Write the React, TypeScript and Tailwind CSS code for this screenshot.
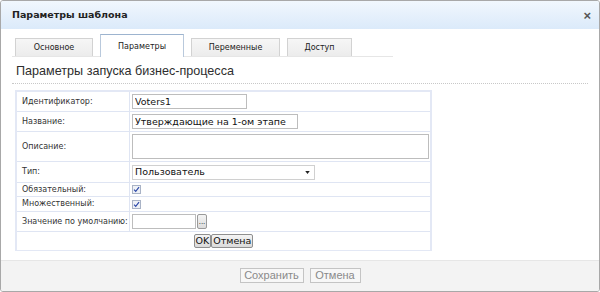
const tabs = ['Основное', 'Параметры', 'Переменные', 'Доступ'];

const ui = { fontFamily: '"DejaVu Sans", Verdana, sans-serif' };
const arial = { fontFamily: '"Liberation Sans", Arial, sans-serif' };

function Check() {
	return (
		<span className="flex h-[9px] w-[9px] items-center justify-center border border-[#a9b3c6] bg-[#eef1f6]">
			<svg viewBox="0 0 8 8" className="block h-[7px] w-[7px]">
				<path d="M1.2 4.2 L3.1 6.1 L6.9 1.3" fill="none" stroke="#2b47a8" strokeWidth="1.3" />
			</svg>
		</span>
	);
}

function Row({ label, h, children }: { label: string; h: string; children?: React.ReactNode }) {
	return (
		<div className={`grid grid-cols-[113px_1fr] border-b border-[#dfe5f3] ${h}`}>
			<div className="flex items-center border-r border-[#dfe5f3] pl-[5px] text-[8px] leading-none text-[#333]">{label}</div>
			<div className="flex items-center pl-[2px]">{children}</div>
		</div>
	);
}

export default function App() {
	return (
		<div className="h-[292px] w-[600px] bg-white" style={ui}>
			<div className="flex h-[292px] w-[600px] flex-col overflow-hidden rounded-[3px] border border-[#a8a8a8]">
				{/* title */}
				<div className="flex h-[28px] shrink-0 items-center justify-between bg-gradient-to-b from-[#f1f7fd] to-[#dbeafa] pl-[11px] pr-[8px]">
					<span className="text-[9.5px] font-bold text-[#222]">Параметры шаблона</span>
					<span className="text-[13px] font-bold leading-none text-[#555]" style={arial}>×</span>
				</div>

				<div className="flex-1 bg-white px-[11px]">
					{/* tabs */}
					<div className="mt-[6px] flex h-[22px] w-[381px] items-end gap-[7px] border-b border-[#e6e6e6] pl-[3px]">
						{tabs.map((t, i) =>
							i === 1 ? (
								<div
									key={t}
									className="-mb-px flex h-[23px] w-[84px] items-center justify-center border border-b-0 border-[#b9c9dc] border-t-[#9db4cf] bg-white pt-[2px] text-[8px] text-[#222]"
								>
									{t}
								</div>
							) : (
								<div
									key={t}
									className={`flex h-[18px] ${i === 0 ? 'w-[78px]' : i === 2 ? 'w-[89px]' : 'w-[65px]'} items-center justify-center border border-b-0 border-[#d2d2d2] bg-gradient-to-b from-[#f6f6f6] to-[#ececec] text-[8px] text-[#222]`}
								>
									{t}
								</div>
							)
						)}
					</div>

					{/* heading */}
					<div className="mt-[6px] border-b border-dotted border-[#c8c8c8] pb-[4px] pl-[4px] text-[12.6px] leading-[16px] text-[#2e2e2e]" style={arial}>
						Параметры запуска бизнес-процесса
					</div>

					{/* form */}
					<div className="ml-[3px] mt-[6px] w-[417px] border-2 border-b-1 border-[#e3e8f5]">
						<Row label="Идентификатор:" h="h-[20px]">
							<input readOnly value="Voters1" className="block h-[15px] w-[115px] border border-[#bdbdbd] px-[2px] text-[9.5px] text-[#111] outline-none" style={ui} />
						</Row>
						<Row label="Название:" h="h-[20px]">
							<input readOnly value="Утверждающие на 1-ом этапе" className="block h-[15px] w-[166px] border border-[#bdbdbd] px-[2px] text-[9.5px] text-[#111] outline-none" style={ui} />
						</Row>
						<Row label="Описание:" h="h-[30px]">
							<div className="h-[25px] w-[297px] border border-[#bdbdbd]" />
						</Row>
						<Row label="Тип:" h="h-[21px]">
							<div className="flex h-[15px] w-[183px] items-center justify-between border border-[#d0d0d0] pl-[2px] pr-[4px] text-[9.5px] leading-none text-[#111]">
								<span>Пользователь</span>
								<svg viewBox="0 0 6 4" className="block h-[3px] w-[5px]">
									<path d="M0 0 H6 L3 4 Z" fill="#222" />
								</svg>
							</div>
						</Row>
						<Row label="Обязательный:" h="h-[14px]">
							<Check />
						</Row>
						<Row label="Множественный:" h="h-[15px]">
							<Check />
						</Row>
						<Row label="Значение по умолчанию:" h="h-[20px]">
							<div className="flex items-center gap-[1px]">
								<div className="h-[15px] w-[64px] border border-[#bdbdbd]" />
								<div className="flex h-[15px] w-[10px] items-end justify-center rounded-[2px] border border-[#9a9a9a] bg-gradient-to-b from-[#f4f4f4] to-[#dcdcdc] pb-[2px] text-[7px] leading-none text-[#222]">...</div>
							</div>
						</Row>
						<div className="flex h-[18px] items-center justify-center">
							<button className="h-[14px] rounded-[2px] border border-[#8f8f8f] bg-gradient-to-b from-[#f4f4f4] to-[#dadada] px-[1px] text-[9.5px] leading-none text-[#111]">OK</button>
							<button className="h-[14px] rounded-[2px] border border-[#8f8f8f] bg-gradient-to-b from-[#f4f4f4] to-[#dadada] px-[1px] text-[9.5px] leading-none text-[#111]">Отмена</button>
						</div>
					</div>
				</div>

				{/* footer */}
				<div className="flex h-[31px] shrink-0 items-start justify-center gap-[6px] border-t border-[#e6e6e6] bg-[#f3f3f3] pt-[7px]" style={arial}>
					<button className="h-[15px] w-[64px] border border-[#c4c4c4] bg-[#f7f7f7] text-[11px] leading-none text-[#8a8a8a]">Сохранить</button>
					<button className="h-[15px] w-[51px] border border-[#c4c4c4] bg-[#f7f7f7] text-[11px] leading-none text-[#8a8a8a]">Отмена</button>
				</div>
			</div>
		</div>
	);
}
